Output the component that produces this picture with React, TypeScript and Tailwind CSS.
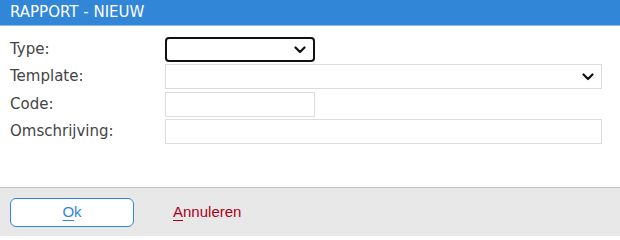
import React from 'react';

const font = { fontFamily: '"DejaVu Sans", Verdana, sans-serif' };
const buttonFont = { fontFamily: '"Liberation Sans", Arial, sans-serif' };

const Chevron = () => (
  <svg width="12" height="8" viewBox="0 0 12 8" className="absolute right-[7px] top-1/2 -translate-y-1/2">
    <path d="M1.5 1.5 L6 6 L10.5 1.5" fill="none" stroke="#111" strokeWidth="2.2" strokeLinecap="round" strokeLinejoin="round" />
  </svg>
);

const Row: React.FC<{ label: string; children: React.ReactNode }> = ({ label, children }) => (
  <div className="flex items-center">
    <label className="w-[155px] shrink-0 text-[15px] text-[#444]">{label}</label>
    {children}
  </div>
);

const App: React.FC = () => {
  return (
    <div className="w-[620px] h-[236px] flex flex-col bg-white" style={font}>
      <div className="h-[26px] bg-[#3186d8] border-b border-[#8dbcea] px-[10px] flex items-center">
        <h1 className="text-[15px] text-white">RAPPORT - NIEUW</h1>
      </div>

      <div className="flex-1 flex flex-col gap-[2px] px-[10px] pt-[11px]">
        <Row label="Type:">
          <div className="relative w-[150px] h-[25px] border-2 border-[#111] rounded-[4px] bg-white">
            <Chevron />
          </div>
        </Row>
        <Row label="Template:">
          <div className="relative w-[437px] h-[25px] border border-[#ddd] bg-white">
            <Chevron />
          </div>
        </Row>
        <Row label="Code:">
          <div className="w-[150px] h-[25px] mt-[1px] border border-[#ddd] bg-white" />
        </Row>
        <Row label="Omschrijving:">
          <div className="w-[437px] h-[25px] border border-[#ddd] bg-white" />
        </Row>
      </div>

      <div className="h-[49px] bg-[#e8e8e8] border-t border-[#c4c4c4] flex items-center px-[10px]" style={buttonFont}>
        <button className="w-[124px] h-[29px] rounded-[6px] border border-[#3186d8] bg-white text-[15px] text-[#3186d8]">
          <span className="underline underline-offset-[3px]">O</span>k
        </button>
        <button className="ml-[39px] text-[15px] text-[#a8001e]">
          <span className="underline underline-offset-[3px]">A</span>nnuleren
        </button>
      </div>
    </div>
  );
};

export default App;
